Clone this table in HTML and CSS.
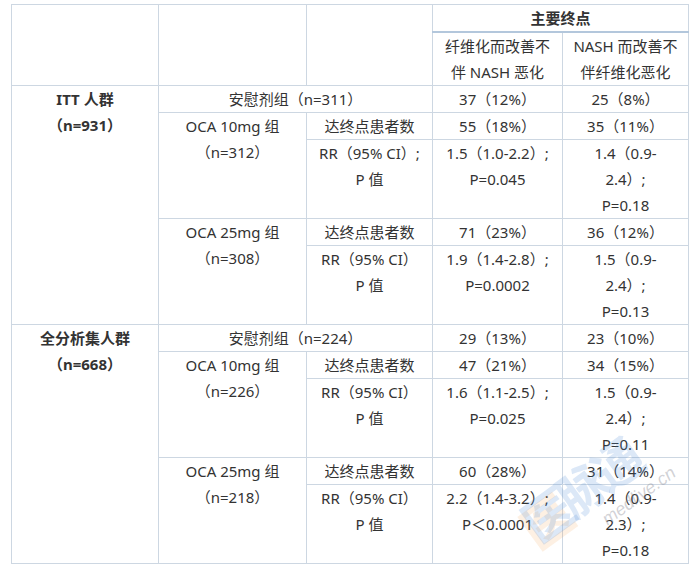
FILE: index.html
```html
<!DOCTYPE html>
<html lang="zh-CN">
<head>
<meta charset="utf-8">
<title>主要终点</title>
<link rel="stylesheet" href="styles.css">
</head>
<body>
<table class="grid">
  <colgroup>
    <col class="c1"><col class="c2"><col class="c3"><col class="c4"><col class="c5">
  </colgroup>
  <tr>
    <td rowspan="2"></td><td rowspan="2"></td><td rowspan="2"></td>
    <th colspan="2" class="head">主要终点</th>
  </tr>
  <tr>
    <td>纤维化而改善不<br>伴 NASH 恶化</td>
    <td>NASH 而改善不<br>伴纤维化恶化</td>
  </tr>

  <tr class="sec">
    <td rowspan="5" class="pop">ITT 人群<br>（n=931）</td>
    <td colspan="2">安慰剂组（n=311）</td>
    <td>37（12%）</td>
    <td>25（8%）</td>
  </tr>
  <tr>
    <td rowspan="2">OCA 10mg 组<br>（n=312）</td>
    <td>达终点患者数</td>
    <td>55（18%）</td>
    <td>35（11%）</td>
  </tr>
  <tr>
    <td>RR（95% CI）;<br>P 值</td>
    <td>1.5（1.0-2.2）;<br>P=0.045</td>
    <td>1.4（0.9-<br>2.4）;<br>P=0.18</td>
  </tr>
  <tr>
    <td rowspan="2">OCA 25mg 组<br>（n=308）</td>
    <td>达终点患者数</td>
    <td>71（23%）</td>
    <td>36（12%）</td>
  </tr>
  <tr>
    <td>RR（95% CI）<br>P 值</td>
    <td>1.9（1.4-2.8）;<br>P=0.0002</td>
    <td>1.5（0.9-<br>2.4）;<br>P=0.13</td>
  </tr>

  <tr class="sec">
    <td rowspan="5" class="pop">全分析集人群<br>（n=668）</td>
    <td colspan="2">安慰剂组（n=224）</td>
    <td>29（13%）</td>
    <td>23（10%）</td>
  </tr>
  <tr>
    <td rowspan="2">OCA 10mg 组<br>（n=226）</td>
    <td>达终点患者数</td>
    <td>47（21%）</td>
    <td>34（15%）</td>
  </tr>
  <tr>
    <td>RR（95% CI）<br>P 值</td>
    <td>1.6（1.1-2.5）;<br>P=0.025</td>
    <td>1.5（0.9-<br>2.4）;<br>P=0.11</td>
  </tr>
  <tr>
    <td rowspan="2">OCA 25mg 组<br>（n=218）</td>
    <td>达终点患者数</td>
    <td>60（28%）</td>
    <td>31（14%）</td>
  </tr>
  <tr>
    <td>RR（95% CI）<br>P 值</td>
    <td>2.2（1.4-3.2）;<br>P＜0.0001</td>
    <td>1.4（0.9-<br>2.3）;<br>P=0.18</td>
  </tr>
</table>

<div class="watermark" aria-hidden="true">
  <span class="wm-cn"><span class="wm-yi">医</span>脉通</span>
  <span class="wm-en">medlive.cn</span>
</div>
</body>
</html>
```

FILE: styles.css
```css
html, body {
  margin: 0;
  padding: 0;
  background: #ffffff;
}

body {
  position: relative;
  width: 694px;
  height: 570px;
  overflow: hidden;
  font-family: "Noto Sans", "Noto Sans CJK SC", sans-serif;
  font-size: 15px;
  color: #333333;
}

.grid {
  margin: 4px 0 0 11px;
  border-collapse: collapse;
  table-layout: fixed;
  width: 677px;
}

.c1 { width: 147px; }
.c2 { width: 148px; }
.c3 { width: 126px; }
.c4 { width: 130px; }
.c5 { width: 126px; }

.grid td,
.grid th {
  border: 1px solid #cdd7e2;
  padding: 0;
  line-height: 26px;
  text-align: center;
  vertical-align: top;
  white-space: nowrap;
  font-weight: normal;
}

.grid th.head {
  font-weight: bold;
  border-bottom: 2px solid #b3c7dc;
  height: 25px;
}

.grid td.pop {
  font-weight: bold;
}

.watermark {
  position: absolute;
  left: 520px;
  top: 440px;
  width: 174px;
  height: 130px;
  pointer-events: none;
}

.wm-cn {
  position: absolute;
  left: 6px;
  top: 62px;
  font-family: "Noto Sans CJK SC", sans-serif;
  font-size: 50px;
  line-height: 50px;
  font-weight: bold;
  letter-spacing: -7px;
  color: rgba(80, 140, 215, 0.2);
  transform: rotate(-36deg);
  transform-origin: left center;
  white-space: nowrap;
}

.wm-yi {
  text-shadow: -5px 5px 0 rgba(240, 150, 60, 0.14);
}

.wm-en {
  position: absolute;
  left: 84px;
  top: 70px;
  font-family: "Liberation Sans", sans-serif;
  font-style: italic;
  font-size: 18px;
  line-height: 22px;
  color: rgba(140, 140, 150, 0.4);
  transform: rotate(-36deg);
  transform-origin: left center;
  white-space: nowrap;
}
```
